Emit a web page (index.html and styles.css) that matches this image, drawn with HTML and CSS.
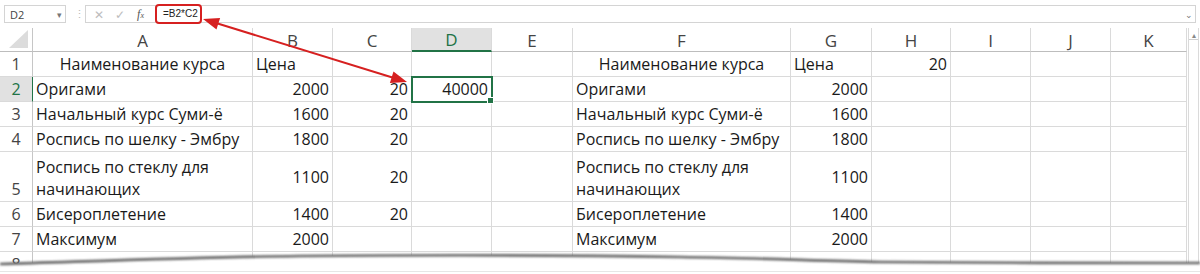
FILE: index.html
```html
<!DOCTYPE html>
<html lang="ru">
<head>
  <meta charset="UTF-8" />
  <title>Формула =B2*C2</title>
  <link rel="stylesheet" href="styles.css">
</head>
<body>

  <!-- строка формул -->
  <div class="formula-bar">
    <div class="name-box"><span>D2</span><span class="caret">▾</span></div>
    <div class="dots">⋮</div>
    <div class="fx-group">
      <span class="fx-btn">✕</span>
      <span class="fx-btn">✓</span>
      <span class="fx-btn fx">f<small>x</small></span>
    </div>
    <div class="formula-input">
      <span class="formula-text">=B2*C2</span>
      <span class="caret">⌄</span>
    </div>
  </div>

  <!-- лист -->
  <div class="sheet">
    <div class="grid" id="grid"></div>
    <div class="vscroll"><div class="vscroll-up">▴</div></div>
  </div>

  <!-- стрелка от формулы к ячейке -->
  <svg class="arrow" width="1200" height="274" viewBox="0 0 1200 274">
    <line x1="216" y1="23" x2="394" y2="78" stroke="#d62020" stroke-width="2" />
    <polygon points="203,19 220.1,18 216.5,29.4" fill="#d62020" />
    <polygon points="407,82 393.5,71.6 389.9,83" fill="#d62020" />
  </svg>

  <!-- оборванный край -->
  <svg class="tear" width="1200" height="28" viewBox="0 0 1200 28">
    <defs>
      <filter id="soft" x="-5%" y="-100%" width="110%" height="300%">
        <feGaussianBlur stdDeviation="1.1" />
      </filter>
    </defs>
    <path d="M0,18 C100,15 200,11 300,10 C420,9 560,9 680,11 C760,12 820,15 880,16 C980,17 1100,17 1200,17 L1200,28 L0,28 Z" fill="#fff" />
    <path d="M0,18 C100,15 200,11 300,10 C420,9 560,9 680,11 C760,12 820,15 880,16 C980,17 1100,17 1200,17" fill="none" stroke="#666" stroke-width="2.6" filter="url(#soft)" />
    <line x1="0" y1="25.5" x2="1200" y2="25.5" stroke="#e6e6e6" stroke-width="1" />
  </svg>

  <script>
    const cols = ['A', 'B', 'C', 'D', 'E', 'F', 'G', 'H', 'I', 'J', 'K'];
    const head = { t: 'Наименование курса', cls: 'center' };
    const wrap = { t: 'Роспись по стеклу для<br>начинающих', cls: 'wrap' };
    const mid  = n => ({ t: n, cls: 'num mid' });

    const rows = [
      [head, 'Цена', '', '', '', head, 'Цена', 20, '', '', ''],
      ['Оригами', 2000, 20, { t: 40000, cls: 'num sel' }, '', 'Оригами', 2000, '', '', '', ''],
      ['Начальный курс Суми-ё', 1600, 20, '', '', 'Начальный курс Суми-ё', 1600, '', '', '', ''],
      ['Роспись по шелку - Эмбру', 1800, 20, '', '', 'Роспись по шелку - Эмбру', 1800, '', '', '', ''],
      [wrap, mid(1100), mid(20), '', '', wrap, mid(1100), '', '', '', ''],
      ['Бисероплетение', 1400, 20, '', '', 'Бисероплетение', 1400, '', '', '', ''],
      ['Максимум', 2000, '', '', '', 'Максимум', 2000, '', '', '', ''],
      ['', '', '', '', '', '', '', '', '', '', '']
    ];

    const grid = document.getElementById('grid');

    function cell(cls, html) {
      const d = document.createElement('div');
      d.className = cls;
      d.innerHTML = html;
      grid.appendChild(d);
    }

    // шапка столбцов
    cell('corner', '<svg width="20" height="19" viewBox="0 0 20 19"><polygon points="19,0 19,18 0,18" fill="#dcdcdc"/></svg>');
    cols.forEach(c => cell('col-head' + (c === 'D' ? ' active' : ''), c));

    rows.forEach((r, i) => {
      cell('row-head' + (i === 1 ? ' active' : ''), i + 1);
      r.forEach(v => {
        if (typeof v === 'number') cell('cell num', v);
        else if (typeof v === 'object') cell('cell ' + v.cls, v.t);
        else cell('cell', v);
      });
    });
  </script>

</body>
</html>
```

FILE: styles.css
```css
/* общий фон */
html, body {
  margin: 0; padding: 0;
}
body {
  width: 1200px; height: 274px;
  overflow: hidden;
  position: relative;
  background: #fff;
  font-family: "Open Sans", "Noto Sans", sans-serif;
  color: #1a1a1a;
}

/* строка формул */
.formula-bar {
  display: flex;
  height: 18px;
  margin-top: 5px;
  padding: 0 4px;
  font-size: 11px;
  color: #444;
}
.name-box {
  width: 62px;
  box-sizing: border-box;
  border: 1px solid #d4d4d4;
  display: flex; align-items: center; justify-content: space-between;
  padding: 0 3px 0 5px;
}
.caret {
  color: #777;
  font-size: 9px;
}
.dots {
  width: 19px;
  box-sizing: border-box;
  padding-left: 8px;
  color: #bbb;
  line-height: 18px;
}
.fx-group {
  width: 70px;
  box-sizing: border-box;
  border: 1px solid #d4d4d4;
  border-right: none;
  display: flex; align-items: center;
  padding-left: 2px;
}
.fx-btn {
  width: 21px;
  text-align: center;
  color: #bdbdbd;
  font-size: 12px;
}
.fx-btn.fx {
  color: #555;
  font-style: italic;
  font-family: "Liberation Serif", serif;
}
.fx-btn.fx small {
  font-size: 8px;
}
.formula-input {
  flex: 1;
  border: 1px solid #d4d4d4;
  display: flex; align-items: center; justify-content: space-between;
  padding-right: 2px;
}
.formula-text {
  box-sizing: border-box;
  width: 47px; height: 20px;
  margin-left: -1px;
  padding-left: 6px;
  border: 2px solid #d62020;
  border-radius: 4px;
  font-family: "Liberation Sans", sans-serif;
  font-size: 10px;
  line-height: 16px;
  color: #222;
}

/* лист */
.sheet {
  display: flex;
  margin-top: 5px;
}
.grid {
  display: grid;
  grid-template-columns: 33px 220px 80px 79px 80px 81px 218px 81px 79px 80px 80px 76px;
  grid-template-rows: 24px 25px 25px 25px 25px 50px 25px 25px 25px;
}
.grid > div {
  box-sizing: border-box;
  position: relative;
}

.corner {
  border-right: 1px solid #c6c6c6;
  border-bottom: 1px solid #bdbdbd;
  display: flex; align-items: center; justify-content: center;
  padding-left: 5px;
}
.col-head {
  border-right: 1px solid #dadada;
  border-bottom: 1px solid #bdbdbd;
  display: flex; align-items: center; justify-content: center;
  padding-top: 1px;
  font-size: 17px;
  color: #444;
}
.col-head.active {
  background: #e1e1e1;
  color: #217346;
  border-bottom: 2px solid #217346;
}
.row-head {
  border-right: 1px solid #c6c6c6;
  border-bottom: 1px solid #dadada;
  display: flex; align-items: flex-end; justify-content: center;
  padding-bottom: 1px;
  font-size: 16px;
  line-height: 22px;
  color: #444;
}
.row-head.active {
  background: #e1e1e1;
  color: #217346;
  border-right-color: #217346;
}

/* ячейки */
.cell {
  border-right: 1px solid #dadada;
  border-bottom: 1px solid #dadada;
  display: flex; align-items: flex-end;
  padding: 0 3px 1px;
  font-size: 16px;
  line-height: 22px;
  white-space: nowrap;
}
.cell.num { justify-content: flex-end; }
.cell.center { justify-content: center; }
.cell.mid { align-items: center; padding-bottom: 0; }
.cell.wrap { white-space: normal; }
.cell.sel {
  outline: 2px solid #217346;
  outline-offset: -1px;
  z-index: 1;
}
.cell.sel::after {
  content: "";
  position: absolute;
  right: -3px; bottom: -3px;
  width: 5px; height: 5px;
  background: #217346;
  border: 1px solid #fff;
}

/* полоса прокрутки */
.vscroll {
  width: 9px;
  margin-left: 1px;
  border-left: 1px solid #dadada;
  border-right: 1px solid #dadada;
}
.vscroll-up {
  height: 9px;
  margin-top: 2px;
  border-bottom: 1px solid #d0d0d0;
  font-size: 8px;
  line-height: 9px;
  text-align: center;
  color: #888;
}

/* наложения */
.arrow {
  position: absolute;
  top: 0; left: 0;
  pointer-events: none;
  z-index: 5;
}
.tear {
  position: absolute;
  left: 0; top: 246px;
  z-index: 4;
}
```
